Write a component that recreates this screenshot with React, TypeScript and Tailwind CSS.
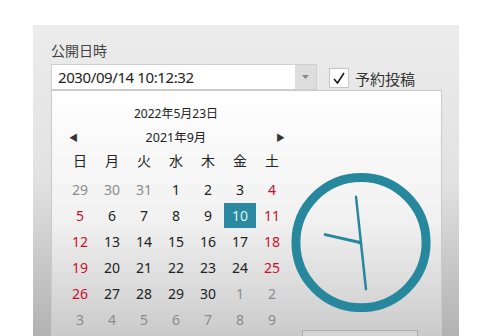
import React from "react";

type Day = { d: number; kind: "other" | "sun" | "sat" | "normal"; selected?: boolean };

const weekdays = ["日", "月", "火", "水", "木", "金", "土"];

function buildDays(): Day[] {
  const days: Day[] = [];
  [29, 30, 31].forEach((d) => days.push({ d, kind: "other" }));
  for (let d = 1; d <= 30; d++) {
    const col = days.length % 7;
    days.push({ d, kind: col === 0 ? "sun" : col === 6 ? "sat" : "normal", selected: d === 10 });
  }
  let n = 1;
  while (days.length < 42) days.push({ d: n++, kind: "other" });
  return days;
}

function dayColor(day: Day) {
  if (day.selected) return "bg-[#2b8aa1] text-[#dff1f5]";
  if (day.kind === "other") return "text-[#8c8c8c]";
  if (day.kind === "sun" || day.kind === "sat") return "text-[#c8102e]";
  return "text-[#222]";
}

function Clock() {
  return (
    <svg width="140" height="140" viewBox="0 0 140 140">
      <circle cx="70" cy="70" r="65.5" fill="none" stroke="#27889d" strokeWidth="9" />
      <line x1="69" y1="70" x2="34" y2="62" stroke="#27889d" strokeWidth="3" strokeLinecap="round" />
      <line x1="65" y1="24" x2="75" y2="117" stroke="#27889d" strokeWidth="2.5" strokeLinecap="round" />
      <circle cx="69" cy="70" r="2" fill="#27889d" />
    </svg>
  );
}

export default function App() {
  const days = buildDays();
  return (
    <div
      className="w-[486px] h-[336px] bg-white pt-[25px] pl-[33px] overflow-hidden"
      style={{ fontFamily: '"Noto Sans", "Noto Sans CJK JP", sans-serif' }}
    >
      <div className="w-[426px] h-[311px] bg-gradient-to-b from-[#ececec] via-[#e2e2e2] to-[#b2b2b2] pt-[16px] pl-[18px]">
        <div className="h-[20px] text-[14px] leading-[20px] text-[#444]">公開日時</div>
        <div className="flex items-start mt-[3px] h-[26px]">
          <div className="flex w-[266px] h-[26px] border border-[#cfcfcf] bg-white">
            <div className="flex-1 pl-[6px] text-[15px] tracking-[-0.4px] leading-[24px] text-[#222]">2030/09/14 10:12:32</div>
            <div className="w-[21px] h-full bg-[#dedede] flex items-center justify-center">
              <svg width="7" height="4" viewBox="0 0 7 4">
                <polygon points="0,0 7,0 3.5,4" fill="#8a8a8a" />
              </svg>
            </div>
          </div>
          <div className="ml-[12px] mt-[4px] w-[20px] h-[20px] border border-[#c6c6c6] bg-white flex items-center justify-center">
            <svg width="14" height="14" viewBox="0 0 14 14">
              <polyline points="2,8 5.5,12 12,2" fill="none" stroke="#111" strokeWidth="1.5" />
            </svg>
          </div>
          <div className="ml-[6px] text-[15px] leading-[26px] text-[#333] mt-[2px]">予約投稿</div>
        </div>
        <div className="w-[391px] h-[260px] border border-b-0 border-[#cacaca] bg-gradient-to-b from-white via-[#f1f1f1] to-[#c6c6c6] flex">
          <div className="w-[224px] ml-[12px] pt-[14px] flex flex-col">
            <div className="h-[18px] text-[12px] leading-[18px] text-center text-[#222]">2022年5月23日</div>
            <div className="h-[18px] mt-[6px] flex items-center justify-between text-[12.5px] text-[#222]">
              <span className="w-[16px] text-[9px] text-[#333] pl-[5px]">◀</span>
              <span>2021年9月</span>
              <span className="w-[16px] text-[9px] text-[#333] text-right pr-[3px]">▶</span>
            </div>
            <div className="grid grid-cols-7 h-[22px] mt-[3px] text-[14px] leading-[22px] text-[#222]">
              {weekdays.map((w) => (
                <div key={w} className="text-center">{w}</div>
              ))}
            </div>
            <div className="grid grid-cols-7 mt-[4px]">
              {days.map((day, i) => (
                <div key={i} className="h-[26px] flex items-center justify-center">
                  <div className={`w-[32px] h-[25px] flex items-center justify-center text-[14px] ${dayColor(day)}`}>
                    {day.d}
                  </div>
                </div>
              ))}
            </div>
          </div>
          <div className="ml-[3px] pt-[82px] flex flex-col">
            <Clock />
            <div className="ml-[11px] mt-[18px] w-[116px] h-[20px] border border-[#b0b0b0] bg-[#d4d4d4]" />
          </div>
        </div>
      </div>
    </div>
  );
}
